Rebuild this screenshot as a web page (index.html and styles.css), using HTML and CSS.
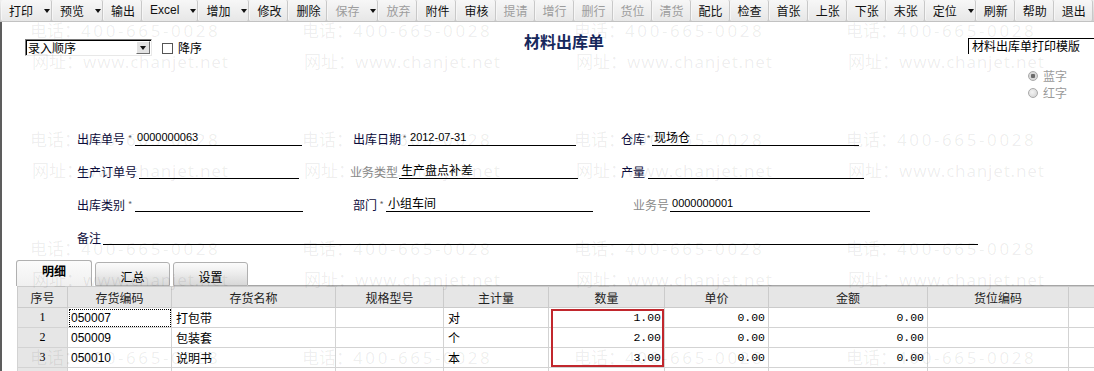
FILE: index.html
```html
<!DOCTYPE html>
<html lang="zh">
<head>
<meta charset="utf-8">
<title>材料出库单</title>
<link rel="stylesheet" href="styles.css">
</head>
<body>
<div class="toolbar">
  <div class="tb dd">打印<i class="arr"></i></div>
  <div class="tb dd">预览<i class="arr"></i></div>
  <div class="tb">输出</div>
  <div class="tb dd latin">Excel<i class="arr"></i></div>
  <div class="tb dd">增加<i class="arr"></i></div>
  <div class="tb">修改</div>
  <div class="tb">删除</div>
  <div class="tb dd off">保存<i class="arr"></i></div>
  <div class="tb off">放弃</div>
  <div class="tb">附件</div>
  <div class="tb">审核</div>
  <div class="tb off">提请</div>
  <div class="tb off">增行</div>
  <div class="tb off">删行</div>
  <div class="tb off">货位</div>
  <div class="tb off">清货</div>
  <div class="tb">配比</div>
  <div class="tb">检查</div>
  <div class="tb">首张</div>
  <div class="tb">上张</div>
  <div class="tb">下张</div>
  <div class="tb">末张</div>
  <div class="tb dd">定位<i class="arr"></i></div>
  <div class="tb">刷新</div>
  <div class="tb">帮助</div>
  <div class="tb">退出</div>
</div>

<div class="page">
  <div class="topbar">
    <div class="sel"><span class="sel-text">录入顺序</span><span class="sel-btn"><i class="arr"></i></span></div>
    <span class="chk"></span><span class="chk-label">降序</span>
    <h1 class="title">材料出库单</h1>
    <div class="tpl">材料出库单打印模版</div>
  </div>

  <div class="radios">
    <div class="radio-row"><span class="radio on"></span><span>蓝字</span></div>
    <div class="radio-row"><span class="radio"></span><span>红字</span></div>
  </div>

  <div class="form">
    <div class="frow">
      <div class="field c1"><span class="lbl">出库单号</span><span class="star">*</span><span class="val num w167">0000000063</span></div>
      <div class="field c2"><span class="lbl">出库日期</span><span class="star s7">*</span><span class="val num w168">2012-07-31</span></div>
      <div class="field"><span class="lbl">仓库</span><span class="star s7">*</span><span class="val w207">现场仓</span></div>
    </div>
    <div class="frow">
      <div class="field c1"><span class="lbl">生产订单号</span><span class="gap2"></span><span class="val w160"></span></div>
      <div class="field c2 shift"><span class="lbl grey">业务类型</span><span class="gap1"></span><span class="val w179">生产盘点补差</span></div>
      <div class="field"><span class="lbl">产量</span><span class="gap3"></span><span class="val w216"></span></div>
    </div>
    <div class="frow">
      <div class="field c1"><span class="lbl">出库类别</span><span class="star">*</span><span class="val w168"></span></div>
      <div class="field c2"><span class="lbl">部门</span><span class="star s9">*</span><span class="val w207">小组车间</span></div>
      <div class="field push"><span class="lbl grey">业务号</span><span class="gap1"></span><span class="val num w200">0000000001</span></div>
    </div>
    <div class="frow">
      <div class="field"><span class="lbl">备注</span><span class="gap2"></span><span class="val w875"></span></div>
    </div>
  </div>

  <div class="tabs">
    <div class="tab active">明细</div>
    <div class="tab">汇总</div>
    <div class="tab">设置</div>
    <div class="tab-fill"></div>
  </div>

  <div class="grid-wrap">
    <table class="grid">
      <colgroup>
        <col class="k50"><col class="k104"><col class="k164"><col class="k108"><col class="k105"><col class="k116"><col class="k104"><col class="k159"><col class="k141"><col class="k40">
      </colgroup>
      <thead>
        <tr><th>序号</th><th>存货编码</th><th>存货名称</th><th>规格型号</th><th>主计量</th><th>数量</th><th>单价</th><th>金额</th><th>货位编码</th><th></th></tr>
      </thead>
      <tbody>
        <tr><td class="no">1</td><td class="code focus">050007</td><td>打包带</td><td></td><td>对</td><td class="n">1.00</td><td class="n">0.00</td><td class="n">0.00</td><td></td><td></td></tr>
        <tr><td class="no">2</td><td class="code">050009</td><td>包装套</td><td></td><td>个</td><td class="n">2.00</td><td class="n">0.00</td><td class="n">0.00</td><td></td><td></td></tr>
        <tr><td class="no">3</td><td class="code">050010</td><td>说明书</td><td></td><td>本</td><td class="n">3.00</td><td class="n">0.00</td><td class="n">0.00</td><td></td><td></td></tr>
        <tr><td class="no"></td><td></td><td></td><td></td><td></td><td></td><td></td><td></td><td></td><td></td></tr>
      </tbody>
    </table>
    <div class="mark"></div>
  </div>
</div>

<div class="watermark">
  <div class="wm"><div class="t1">电话：<span class="d">400-665-0028</span></div><div class="t2">网址：<span class="u">www.chanjet.net</span></div></div>
  <div class="wm"><div class="t1">电话：<span class="d">400-665-0028</span></div><div class="t2">网址：<span class="u">www.chanjet.net</span></div></div>
  <div class="wm"><div class="t1">电话：<span class="d">400-665-0028</span></div><div class="t2">网址：<span class="u">www.chanjet.net</span></div></div>
  <div class="wm"><div class="t1">电话：<span class="d">400-665-0028</span></div><div class="t2">网址：<span class="u">www.chanjet.net</span></div></div>
  <div class="wm"><div class="t1">电话：<span class="d">400-665-0028</span></div><div class="t2">网址：<span class="u">www.chanjet.net</span></div></div>
  <div class="wm"><div class="t1">电话：<span class="d">400-665-0028</span></div><div class="t2">网址：<span class="u">www.chanjet.net</span></div></div>
  <div class="wm"><div class="t1">电话：<span class="d">400-665-0028</span></div><div class="t2">网址：<span class="u">www.chanjet.net</span></div></div>
  <div class="wm"><div class="t1">电话：<span class="d">400-665-0028</span></div><div class="t2">网址：<span class="u">www.chanjet.net</span></div></div>
  <div class="wm"><div class="t1">电话：<span class="d">400-665-0028</span></div><div class="t2">网址：<span class="u">www.chanjet.net</span></div></div>
  <div class="wm"><div class="t1">电话：<span class="d">400-665-0028</span></div><div class="t2">网址：<span class="u">www.chanjet.net</span></div></div>
  <div class="wm"><div class="t1">电话：<span class="d">400-665-0028</span></div><div class="t2">网址：<span class="u">www.chanjet.net</span></div></div>
  <div class="wm"><div class="t1">电话：<span class="d">400-665-0028</span></div><div class="t2">网址：<span class="u">www.chanjet.net</span></div></div>
  <div class="wm"><div class="t1">电话：<span class="d">400-665-0028</span></div></div>
  <div class="wm"><div class="t1">电话：<span class="d">400-665-0028</span></div></div>
  <div class="wm"><div class="t1">电话：<span class="d">400-665-0028</span></div></div>
  <div class="wm"><div class="t1">电话：<span class="d">400-665-0028</span></div></div>
</div>
</body>
</html>
```

FILE: styles.css
```css
* { box-sizing: border-box; }

body {
  margin: 0;
  width: 1094px;
  height: 371px;
  overflow: hidden;
  position: relative;
  background: #fff;
  font-family: "Noto Sans CJK SC", "Liberation Sans", sans-serif;
  font-size: 12px;
  color: #000;
}

/* ---------- toolbar ---------- */
.toolbar {
  display: flex;
  height: 22px;
  padding-left: 1px;
  background: linear-gradient(#efefef, #dadada 60%, #d0d0d0);
  border-bottom: 1px solid #c2c2c2;
  white-space: nowrap;
}
.tb {
  display: flex;
  align-items: center;
  flex-shrink: 0;
  height: 21px;
  padding: 0 6px 0 7px;
  line-height: 21px;
  border-left: 1px solid #f6f6f6;
  border-right: 1px solid #c8c8c8;
  border-radius: 2px;
  background: linear-gradient(#f7f7f7, #e7e7e7);
  color: #111;
}
.tb.dd { padding-right: 1px; }
.tb.latin { font-family: "Liberation Sans", sans-serif; }
.tb.off { color: #9d9d9d; }
.arr {
  display: inline-block;
  width: 0;
  height: 0;
  margin-left: 11px;
  border-left: 3.5px solid transparent;
  border-right: 3.5px solid transparent;
  border-top: 4px solid #111;
}

/* ---------- page ---------- */
.page {
  height: 349px;
  overflow: hidden;
  border-left: 2px solid #5d5d5d;
}

.topbar {
  display: flex;
  align-items: flex-start;
  margin-top: 11px;
  height: 23px;
}
.topbar > * { flex-shrink: 0; }
.sel {
  display: flex;
  margin: 6px 0 0 23px;
  width: 127px;
  height: 17px;
  border-top: 1px solid #7a7a7a;
  border-left: 1px solid #7a7a7a;
  border-right: 1px solid #e8e8e8;
  border-bottom: 1px solid #e8e8e8;
  box-shadow: inset 1px 1px 0 #000;
  background: #fff;
}
.sel-text {
  flex: 1;
  padding-left: 2px;
  line-height: 15px;
  font-size: 12px;
}
.sel-btn {
  display: flex;
  align-items: center;
  justify-content: center;
  width: 14px;
  margin: 1px 1px 1px 0;
  background: #e2e2e2;
  border-top: 1px solid #fff;
  border-left: 1px solid #fff;
  border-right: 1px solid #6f6f6f;
  border-bottom: 1px solid #6f6f6f;
}
.sel-btn .arr { margin-left: 0; }
.chk {
  margin: 10px 0 0 10px;
  width: 11px;
  height: 11px;
  border: 1px solid #555;
  background: #fff;
}
.chk-label {
  margin: 6px 0 0 5px;
  line-height: 17px;
}
.title {
  margin: 0 0 0 322px;
  width: 84px;
  font-size: 16px;
  line-height: 16px;
  font-weight: bold;
  color: #16285c;
}
.tpl {
  margin: 5px 0 0 360px;
  width: 140px;
  height: 16px;
  padding-left: 3px;
  line-height: 14px;
  border-top: 1px solid #000;
  border-left: 1px solid #000;
  background: #fff;
}

/* radios */
.radios {
  margin: 11px 0 0 1026px;
  color: #9a9a9a;
}
.radio-row {
  display: flex;
  align-items: center;
  height: 17px;
  white-space: nowrap;
}
.radio {
  width: 10px;
  height: 10px;
  margin-right: 5px;
  border-radius: 50%;
  border: 1px solid #a9a9a9;
  background: radial-gradient(circle at 40% 40%, #f4f4f4, #cfcfcf);
}
.radio.on {
  background: radial-gradient(circle, #6b6b6b 0 2px, #d8d8d8 2.5px);
}

/* form */
.form { margin-top: 12px; }
.frow {
  display: flex;
  align-items: flex-end;
  height: 33px;
  padding-left: 75px;
}
.field {
  display: flex;
  align-items: flex-end;
  flex-shrink: 0;
  white-space: nowrap;
}
.c1 { width: 276px; }
.c2 { width: 268px; }
.shift { margin-left: -3px; width: 271px; }
.push { margin-left: 12px; }
.lbl {
  line-height: 14px;
  color: #0b0b3a;
}
.lbl.grey { color: #8a8a8a; }
.star {
  width: 10px;
  line-height: 14px;
  height: 14px;
  text-align: center;
  font-size: 9px;
  color: #666;
}
.s7 { width: 7px; }
.s9 { width: 9px; }
.gap1 { width: 1px; }
.gap2 { width: 2px; }
.gap3 { width: 3px; }
.val {
  height: 16px;
  line-height: 14px;
  padding-left: 2px;
  border-bottom: 1px solid #000;
}
.val.num {
  font-family: "Liberation Sans", sans-serif;
  font-size: 11px;
}
.w160 { width: 160px; }
.w167 { width: 167px; }
.w168 { width: 168px; }
.w179 { width: 179px; }
.w200 { width: 200px; }
.w207 { width: 207px; }
.w216 { width: 216px; }
.w875 { width: 875px; }

/* tabs */
.tabs {
  display: flex;
  align-items: flex-end;
  height: 26px;
  margin-top: 15px;
  padding-left: 14px;
}
.tab {
  flex-shrink: 0;
  width: 75px;
  height: 24px;
  margin-left: 3px;
  padding-top: 7px;
  text-align: center;
  line-height: 14px;
  border: 1px solid #b0b0b0;
  border-radius: 3px 3px 0 0;
  background: linear-gradient(#fbfbfb, #efefef 40%, #d8d8d8);
}
.tab.active {
  margin-left: 0;
  width: 76px;
  height: 26px;
  padding-top: 3px;
  font-weight: bold;
  border-bottom: none;
  background: linear-gradient(#fbfbfb, #f0f0f0);
}
.tab-fill {
  flex: 1;
  border-bottom: 1px solid #a6a6a6;
}

/* grid */
.grid-wrap {
  position: relative;
  margin-left: 15px;
}
.grid {
  border-collapse: collapse;
  table-layout: fixed;
  width: 1091px;
}
.k50 { width: 50px; }
.k104 { width: 104px; }
.k164 { width: 164px; }
.k108 { width: 108px; }
.k105 { width: 105px; }
.k116 { width: 116px; }
.k141 { width: 141px; }
.k159 { width: 159px; }
.k40 { width: 40px; }
.grid th {
  height: 21px;
  padding: 0;
  font-weight: normal;
  text-align: center;
  background: #e6e6e6;
  border: 1px solid #cbcbcb;
  color: #222;
}
.grid td {
  height: 20px;
  padding: 0 4px;
  border: 1px solid #d3d3d3;
  white-space: nowrap;
  overflow: hidden;
}
.grid td.no {
  text-align: center;
  background: #e6e6e6;
  font-family: "Liberation Serif", serif;
}
.grid td.code {
  padding-left: 3px;
  font-family: "Liberation Sans", sans-serif;
  font-size: 12px;
}
.grid td.focus { outline: 1px dotted #000; outline-offset: -2px; }
.grid td.n {
  text-align: right;
  padding-right: 3px;
  font-family: "Liberation Mono", monospace;
  font-size: 11.5px;
}
.mark {
  position: absolute;
  left: 534px;
  top: 23px;
  width: 113px;
  height: 58px;
  border: 2px solid #c1272d;
}

/* watermark overlay */
.watermark {
  position: absolute;
  top: 20px;
  left: 30px;
  width: 1064px;
  height: 351px;
  overflow: hidden;
  display: grid;
  grid-template-columns: repeat(4, 272px);
  grid-auto-rows: 109px;
  pointer-events: none;
  color: rgba(0, 0, 0, 0.07);
  font-size: 17px;
  line-height: 20px;
  white-space: nowrap;
}
.wm .t2 { margin-top: 10px; padding-left: 2px; }
.wm .d { letter-spacing: 2.6px; font-family: "Noto Sans", sans-serif; }
.wm .u { letter-spacing: 0.8px; font-family: "Noto Sans", sans-serif; }
```
